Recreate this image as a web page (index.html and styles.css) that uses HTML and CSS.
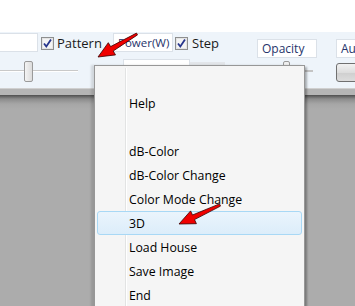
FILE: index.html
```html
<!DOCTYPE html>
<html lang="en">
<head>
  <meta charset="UTF-8">
  <title>Menu</title>
  <link rel="stylesheet" href="styles.css">
</head>
<body>
  <div class="screen">
    <div class="top"></div>

    <!-- Toolbar -->
    <div class="toolbar">
      <div class="row row-one">
        <div class="field field-left"></div>
        <label class="check check-pattern">
          <svg class="box" width="13" height="13" viewBox="0 0 13 13">
            <rect x="0.5" y="0.5" width="12" height="12" fill="#e4e4e4" stroke="#8e8f8f"/>
            <rect x="2" y="2" width="9" height="9" fill="#f4f4f4"/>
            <path d="M3 6.5 L5.3 9.5 L10 2.5" fill="none" stroke="#26358c" stroke-width="1.8"/>
          </svg>Pattern</label>
        <div class="field field-power">Power(W)</div>
        <label class="check check-step">
          <svg class="box" width="13" height="13" viewBox="0 0 13 13">
            <rect x="0.5" y="0.5" width="12" height="12" fill="#e4e4e4" stroke="#8e8f8f"/>
            <rect x="2" y="2" width="9" height="9" fill="#f4f4f4"/>
            <path d="M3 6.5 L5.3 9.5 L10 2.5" fill="none" stroke="#26358c" stroke-width="1.8"/>
          </svg>Step</label>
        <div class="field field-opacity">Opacity</div>
        <div class="field field-auto">Auto</div>
      </div>
      <div class="row row-two">
        <div class="slider"><span class="thumb"></span></div>
        <div class="field field-low"></div>
        <div class="grey-block"></div>
        <div class="small-thumb"></div>
        <div class="track-right"></div>
        <div class="btn"></div>
      </div>
    </div>

    <div class="separator"></div>
    <div class="canvas"></div>

    <!-- Popup menu -->
    <div class="menu">
      <div class="gutter-line"></div>
      <div class="item"></div>
      <div class="item">Help</div>
      <div class="item"></div>
      <div class="item">dB-Color</div>
      <div class="item">dB-Color Change</div>
      <div class="item">Color Mode Change</div>
      <div class="item active">3D</div>
      <div class="item">Load House</div>
      <div class="item">Save Image</div>
      <div class="item">End</div>
    </div>

    <!-- Red arrows -->
    <svg class="arrows" width="355" height="306" viewBox="0 0 355 306">
      <polygon points="98,57 108.3,42.7 110.6,46.6 136.5,33.1 137.5,34.9 113.2,51 115.5,54.9"
               fill="#f00000" stroke="#3a0000" stroke-width="0.8" stroke-linejoin="round"/>
      <polygon points="179,224 190.6,210.9 192.5,215 219.5,203.9 220.5,206.1 194.5,219.6 196.4,223.7"
               fill="#f00000" stroke="#3a0000" stroke-width="0.8" stroke-linejoin="round"/>
    </svg>
  </div>
</body>
</html>
```
FILE: styles.css
```css
body {
  margin: 0;
  padding: 0;
  font-family: "Open Sans", "Noto Sans", sans-serif;
  background: #ffffff;
}

.screen {
  position: relative;
  width: 355px;
  height: 306px;
  overflow: hidden;
}

.top {
  height: 32px;
  background: #ffffff;
}

.toolbar {
  height: 56px;
  background: #eef4fa;
}

.row {
  display: flex;
  position: relative;
}

.row-one {
  height: 26px;
  align-items: flex-start;
}

.field {
  flex: none;
  box-sizing: border-box;
  background: #ffffff;
  border: 1px solid #dbe1e8;
  height: 19px;
  font-size: 11.5px;
  line-height: 17px;
  color: #26346b;
  padding-left: 4px;
  overflow: hidden;
  white-space: nowrap;
}

.field-left {
  width: 38px;
  margin-top: 1px;
  border-left: none;
}

.check {
  flex: none;
  display: flex;
  align-items: center;
  font-size: 13px;
  color: #1a1a1a;
  margin-top: 4px;
  height: 14px;
}

.check .box {
  flex: none;
  margin-right: 3px;
}

.check-pattern {
  width: 72px;
  margin-left: 3px;
}

.field-power {
  width: 60px;
  margin-top: 1px;
}

.check-step {
  width: 82px;
  margin-left: 2px;
}

.check-step .box {
  margin-right: 4px;
}

.field-opacity {
  width: 60px;
  margin-top: 7px;
  font-size: 12px;
}

.field-auto {
  width: 30px;
  margin-left: 19px;
  margin-top: 7px;
  font-size: 12px;
}

.row-two {
  height: 30px;
}

.row-two > div {
  flex: none;
}

.slider {
  position: relative;
  width: 78px;
  height: 30px;
  background: linear-gradient(#eef4fa 12px, #c9c9c9 12px, #c9c9c9 13px, #ffffff 13px, #ffffff 14px, #eef4fa 14px);
}

.thumb {
  position: absolute;
  left: 24px;
  top: 3px;
  width: 9px;
  height: 21px;
  box-sizing: border-box;
  border: 1px solid #9a9a9a;
  border-radius: 2px;
  background: linear-gradient(90deg, #f4f4f4, #dcdcdc);
}

.field-low {
  width: 67px;
  height: 10px;
  margin-left: 45px;
  margin-top: 1px;
}

.grey-block {
  width: 35px;
  height: 8px;
  margin-top: 4px;
  background: #e3e6ea;
}

.small-thumb {
  width: 7px;
  height: 8px;
  margin-left: 58px;
  margin-top: 3px;
  box-sizing: border-box;
  border: 1px solid #9a9a9a;
  border-radius: 2px;
  background: #f0f0f0;
}

.track-right {
  width: 8px;
  height: 2px;
  margin-left: 15px;
  margin-top: 12px;
  background: #c4c4c4;
}

.btn {
  width: 30px;
  height: 19px;
  margin-left: 23px;
  margin-top: 5px;
  box-sizing: border-box;
  border: 1px solid #707070;
  border-radius: 3px;
  background: linear-gradient(#f2f2f2, #dddddd 50%, #cfcfcf 51%, #dcdcdc);
}

.separator {
  height: 6px;
  background: #b5b5b5;
  border-top: 1px solid #d0d0d0;
}

.canvas {
  height: 218px;
  background: linear-gradient(#4e4e4e 0, #8c8c8c 4px, #a6a6a6 9px, #acacac 14px, #acacac);
}

.menu {
  position: absolute;
  left: 94px;
  top: 65px;
  width: 211px;
  height: 260px;
  box-sizing: border-box;
  padding: 1px 2px;
  background: #f5f5f5;
  border: 1px solid #979797;
  box-shadow: 2px 2px 2px rgba(0, 0, 0, 0.3), -3px 0 2px rgba(0, 0, 0, 0.12);
  font-family: "Open Sans", "Noto Sans", sans-serif;
  font-size: 12.3px;
  color: #000000;
}

.gutter-line {
  position: absolute;
  left: 30px;
  top: 2px;
  bottom: 0;
  width: 1px;
  background: #e2e3e3;
  border-right: 1px solid #ffffff;
}

.item {
  position: relative;
  box-sizing: border-box;
  height: 24px;
  line-height: 23px;
  padding-left: 31px;
  border: 1px solid transparent;
  border-radius: 3px;
}

.item.active {
  border-color: #a8d8f5;
  background: linear-gradient(#eaf4fc, #dcedfa);
}

.arrows {
  position: absolute;
  left: 0;
  top: 0;
}
```
